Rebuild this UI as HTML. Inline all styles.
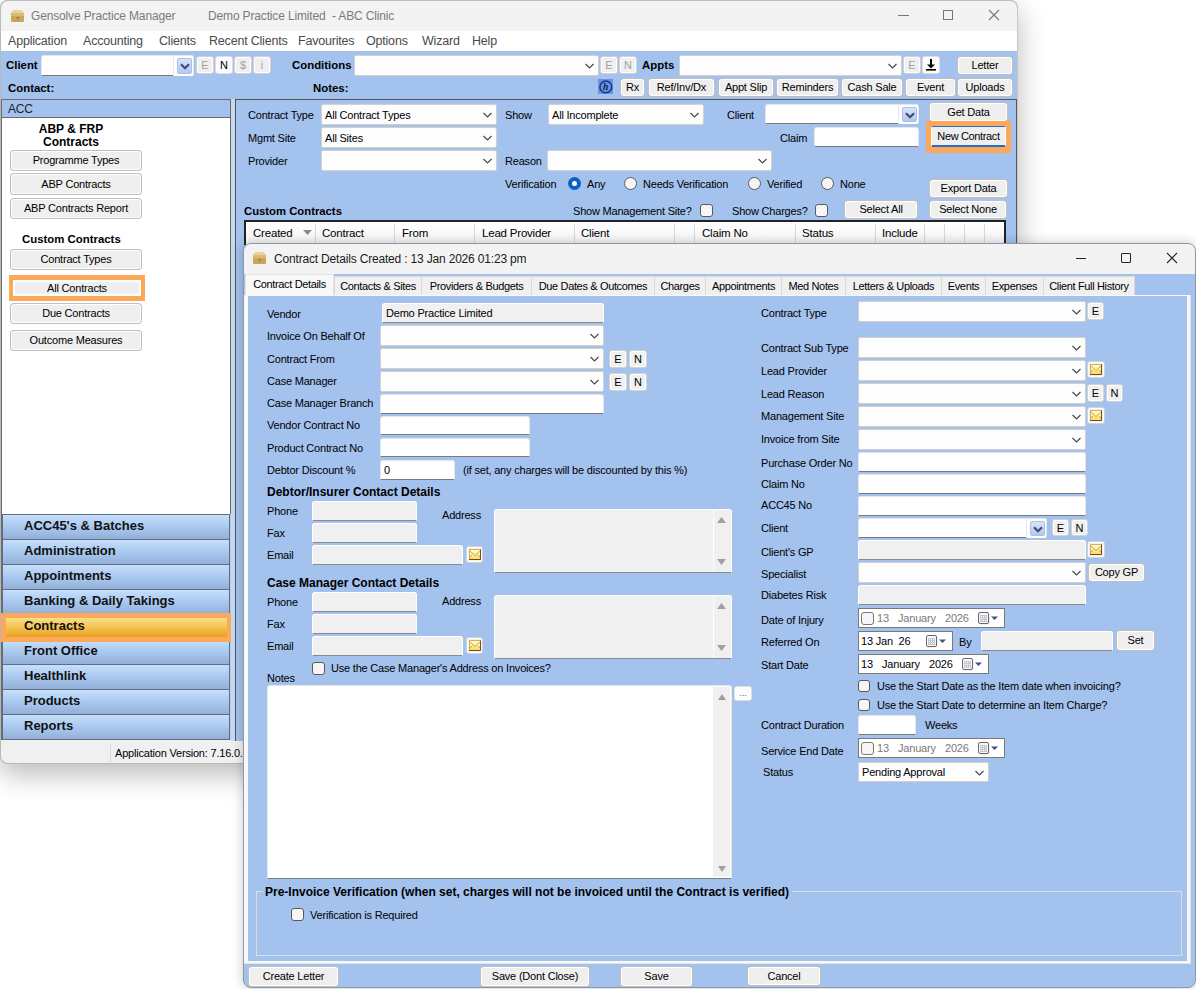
<!DOCTYPE html><html><head><meta charset="utf-8"><style>
html,body{margin:0;padding:0;width:1196px;height:989px;overflow:hidden;background:#fff}
body{position:relative;font-family:"Liberation Sans",sans-serif;font-size:11px;color:#000}
div,svg{position:absolute;box-sizing:border-box}
.t{white-space:nowrap;line-height:14px;letter-spacing:-.2px}
.tb{background:#fff;border:1px solid #e6e6e6;border-bottom:1px solid #7a7a7a;border-radius:3px 3px 0 0}
.cbx{background:#fdfdfd;border:1px solid #d6d0ca;border-radius:2px}
.tb.g{background:#f0f0f0;border-color:#fff;border-bottom-color:#8a8a8a}
.bt{letter-spacing:-.2px;background:#efefef;border:1px solid rgba(0,0,0,.2);box-shadow:inset 0 0 0 1px #fff;border-radius:4px;text-align:center;white-space:nowrap}
.sb{background:#f0f0f0;border:1px solid rgba(0,0,0,.12);box-shadow:inset 0 0 0 1px #fff;border-radius:3px;text-align:center;white-space:nowrap}
.ck{background:#f6f6f6;border:1px solid #5a5a5a;border-radius:3px}
.dd{background:#cfe0fb;border:1px solid #7aa0d8}

</style></head><body>
<svg width="0" height="0" style="left:0;top:0"><defs><linearGradient id="mg" x1="0" y1="0" x2="0" y2="1"><stop offset="0" stop-color="#fffbd8"/><stop offset=".5" stop-color="#fff0a0"/><stop offset="1" stop-color="#f8d868"/></linearGradient></defs></svg>
<div style="left:0px;top:0px;width:1018px;height:764px;border-radius:8px;box-shadow:0 10px 28px rgba(0,0,0,.28);background:#A3C2EE"></div>
<div style="left:0px;top:0px;width:1018px;height:31px;background:#f3f3f3;border-radius:8px 8px 0 0;border:1px solid #bdbdbd;border-bottom:none"></div>
<svg style="left:10px;top:9px" width="15" height="14" viewBox="0 0 15 14"><path d="M1 4L3 1H12L14 4Z" fill="#e8d49a"/><rect x="1" y="4" width="13" height="9" rx="1" fill="#c9a65a"/><rect x="1" y="4" width="13" height="3" fill="#d9bb72"/><text x="7.5" y="12" font-size="6" text-anchor="middle" fill="#8a6a2a" font-family="Liberation Sans">?</text></svg>
<div class=t style="left:31px;top:8.0px;font-size:12px;line-height:16px;color:#7a7a7a;letter-spacing:-.15px">Gensolve Practice Manager</div>
<div class=t style="left:208px;top:8.0px;font-size:12px;line-height:16px;color:#7a7a7a;letter-spacing:-.15px">Demo Practice Limited&nbsp; - ABC Clinic</div>
<div style="left:898px;top:15px;width:11px;height:1px;background:#777"></div>
<div style="left:943px;top:10px;width:10px;height:10px;border:1px solid #777"></div>
<svg style="left:988px;top:9px" width="12" height="12" viewBox="0 0 12 12"><path d="M1 1L11 11M11 1L1 11" stroke="#777" stroke-width="1.1"/></svg>
<div style="left:1px;top:31px;width:1016px;height:20px;background:#fff"></div>
<div class=t style="left:8px;top:33.0px;font-size:12.5px;line-height:16px;color:#4a4a4a;">Application</div>
<div class=t style="left:83px;top:33.0px;font-size:12.5px;line-height:16px;color:#4a4a4a;">Accounting</div>
<div class=t style="left:159px;top:33.0px;font-size:12.5px;line-height:16px;color:#4a4a4a;">Clients</div>
<div class=t style="left:209px;top:33.0px;font-size:12.5px;line-height:16px;color:#4a4a4a;">Recent Clients</div>
<div class=t style="left:298px;top:33.0px;font-size:12.5px;line-height:16px;color:#4a4a4a;">Favourites</div>
<div class=t style="left:366px;top:33.0px;font-size:12.5px;line-height:16px;color:#4a4a4a;">Options</div>
<div class=t style="left:422px;top:33.0px;font-size:12.5px;line-height:16px;color:#4a4a4a;">Wizard</div>
<div class=t style="left:472px;top:33.0px;font-size:12.5px;line-height:16px;color:#4a4a4a;">Help</div>
<div style="left:0px;top:31px;width:1px;height:725px;background:#b8b8b8"></div>
<div style="left:1017px;top:8px;width:1px;height:748px;background:#c8c8c8"></div>
<div class=t style="left:6px;top:58.0px;font-size:11.4px;font-weight:bold;letter-spacing:0;">Client</div>
<div class="tb" style="left:41px;top:55px;width:153px;height:21px"><div style="right:0;top:0;width:20px;height:20px;background:#fff;border-left:1px solid #e4e8f0"><div style="left:3px;top:2px;width:15px;height:16px;border-radius:2px;background:linear-gradient(#d6e3fa,#b4c9ef);border:1px solid #a9bfe6"></div><svg style="left:6px;top:7.0px" width="10" height="7" viewBox="0 0 10 7"><path d="M1 1.2L5 5.2L9 1.2" fill="none" stroke="#3c4e78" stroke-width="2.2"/></svg></div></div>
<div class=sb style="left:196px;top:56px;width:18px;height:18px;line-height:17px;color:#a0a0a0">E</div>
<div class=sb style="left:215px;top:56px;width:18px;height:18px;line-height:17px;color:#000;background:#fbfbfb">N</div>
<div class=sb style="left:234px;top:56px;width:18px;height:18px;line-height:17px;color:#a0a0a0">$</div>
<div class=sb style="left:253px;top:56px;width:18px;height:18px;line-height:17px;color:#a0a0a0">i</div>
<div class=t style="left:292px;top:58.0px;font-size:11.4px;font-weight:bold;letter-spacing:0;">Conditions</div>
<div class="cbx" style="left:354px;top:55px;width:245px;height:21px"><svg style="right:4px;top:7.0px" width="9" height="6" viewBox="0 0 9 6"><path d="M0.5 1L4.5 5L8.5 1" fill="none" stroke="#4a4a4a" stroke-width="1.2"/></svg></div>
<div class=sb style="left:600px;top:56px;width:18px;height:18px;line-height:17px;color:#a0a0a0">E</div>
<div class=sb style="left:619px;top:56px;width:18px;height:18px;line-height:17px;color:#a0a0a0">N</div>
<div class=t style="left:642px;top:58.0px;font-size:11.4px;font-weight:bold;letter-spacing:0;">Appts</div>
<div class="cbx" style="left:679px;top:55px;width:223px;height:21px"><svg style="right:4px;top:7.0px" width="9" height="6" viewBox="0 0 9 6"><path d="M0.5 1L4.5 5L8.5 1" fill="none" stroke="#4a4a4a" stroke-width="1.2"/></svg></div>
<div class=sb style="left:903px;top:56px;width:18px;height:18px;line-height:17px;color:#a0a0a0">E</div>
<div class=sb style="left:922px;top:56px;width:18px;height:18px;background:#fdfdfd"><svg style="left:0;top:0" width="16" height="16" viewBox="0 0 16 16"><rect x="7" y="2" width="2" height="7" fill="#000"/><path d="M4 7.5H12L8 11.5Z" fill="#000"/><rect x="3" y="12" width="10" height="1.6" fill="#000"/></svg></div>
<div class=bt style="left:957px;top:56px;width:56px;height:19px;line-height:17px;">Letter</div>
<div class=t style="left:8px;top:81.0px;font-size:11.4px;font-weight:bold;letter-spacing:0;">Contact:</div>
<div class=t style="left:313px;top:81.0px;font-size:11.4px;font-weight:bold;letter-spacing:0;">Notes:</div>
<div style="left:598px;top:79px;width:15px;height:15px;background:#7092d0"></div>
<svg style="left:598px;top:79px" width="15" height="15" viewBox="0 0 15 15"><circle cx="7.8" cy="7.9" r="5.9" fill="none" stroke="#0a38a8" stroke-width="1.5"/><text x="7.6" y="11.3" font-size="9.5" font-style="italic" font-weight="bold" text-anchor="middle" fill="#102050" font-family="Liberation Serif">h</text></svg>
<div class=bt style="left:620px;top:78px;width:25px;height:19px;line-height:17px;">Rx</div>
<div class=bt style="left:648px;top:78px;width:67px;height:19px;line-height:17px;">Ref/Inv/Dx</div>
<div class=bt style="left:718px;top:78px;width:56px;height:19px;line-height:17px;">Appt Slip</div>
<div class=bt style="left:776px;top:78px;width:63px;height:19px;line-height:17px;">Reminders</div>
<div class=bt style="left:841px;top:78px;width:62px;height:19px;line-height:17px;">Cash Sale</div>
<div class=bt style="left:905px;top:78px;width:51px;height:19px;line-height:17px;">Event</div>
<div class=bt style="left:957px;top:78px;width:56px;height:19px;line-height:17px;">Uploads</div>
<div style="left:1px;top:99px;width:230px;height:642px;background:#fff;border:1px solid #6b6b6b;border-bottom:none"></div>
<div style="left:2px;top:100px;width:228px;height:18px;background:#A3C2EE;border-bottom:1px solid #6b6b6b"></div>
<div class=t style="left:8px;top:101.5px;font-size:12px;color:#222;">ACC</div>
<div class=t style="left:21px;width:100px;top:121.80000000000001px;text-align:center;font-size:12px;font-weight:bold;letter-spacing:0;">ABP &amp; FRP</div>
<div class=t style="left:21px;width:100px;top:134.5px;text-align:center;font-size:12px;font-weight:bold;letter-spacing:0;">Contracts</div>
<div class=bt style="left:10px;top:150px;width:132px;height:21px;line-height:19px;">Programme Types</div>
<div class=bt style="left:10px;top:173px;width:132px;height:22px;line-height:20px;">ABP Contracts</div>
<div class=bt style="left:10px;top:198px;width:132px;height:21px;line-height:19px;">ABP Contracts Report</div>
<div class=t style="left:22px;top:231.8px;font-size:11.4px;font-weight:bold;letter-spacing:0;">Custom Contracts</div>
<div class=bt style="left:10px;top:249px;width:132px;height:21px;line-height:19px;">Contract Types</div>
<div style="left:9px;top:275px;width:136px;height:26px;background:#fba85a"></div>
<div style="left:13px;top:280px;width:128px;height:16px;background:#efefef;border:2px solid #fff;text-align:center;line-height:12px;white-space:nowrap;letter-spacing:-.2px">All Contracts</div>
<div class=bt style="left:10px;top:303px;width:132px;height:21px;line-height:19px;">Due Contracts</div>
<div class=bt style="left:10px;top:330px;width:132px;height:21px;line-height:19px;">Outcome Measures</div>
<div style="left:229px;top:514px;width:1px;height:226px;background:#5f6e82"></div>
<div style="left:230px;top:514px;width:5px;height:226px;background:#b4cdf0"></div>
<div style="left:2px;top:739px;width:228px;height:1px;background:#5f6e82"></div>
<div style="left:2px;top:514px;width:227px;height:25px;background:linear-gradient(#c6e0fb,#a9c8f0 50%,#93afd8);border-top:1px solid #5f6e82;border-left:1px solid #5f6e82"></div>
<div style="left:2px;top:539px;width:227px;height:25px;background:linear-gradient(#c6e0fb,#a9c8f0 50%,#93afd8);border-top:1px solid #5f6e82;border-left:1px solid #5f6e82"></div>
<div style="left:2px;top:564px;width:227px;height:25px;background:linear-gradient(#c6e0fb,#a9c8f0 50%,#93afd8);border-top:1px solid #5f6e82;border-left:1px solid #5f6e82"></div>
<div style="left:2px;top:589px;width:227px;height:25px;background:linear-gradient(#c6e0fb,#a9c8f0 50%,#93afd8);border-top:1px solid #5f6e82;border-left:1px solid #5f6e82"></div>
<div style="left:2px;top:614px;width:227px;height:25px;background:linear-gradient(#c6e0fb,#a9c8f0 50%,#93afd8);border-top:1px solid #5f6e82;border-left:1px solid #5f6e82"></div>
<div style="left:2px;top:639px;width:227px;height:25px;background:linear-gradient(#c6e0fb,#a9c8f0 50%,#93afd8);border-top:1px solid #5f6e82;border-left:1px solid #5f6e82"></div>
<div style="left:2px;top:664px;width:227px;height:25px;background:linear-gradient(#c6e0fb,#a9c8f0 50%,#93afd8);border-top:1px solid #5f6e82;border-left:1px solid #5f6e82"></div>
<div style="left:2px;top:689px;width:227px;height:25px;background:linear-gradient(#c6e0fb,#a9c8f0 50%,#93afd8);border-top:1px solid #5f6e82;border-left:1px solid #5f6e82"></div>
<div style="left:2px;top:714px;width:227px;height:25px;background:linear-gradient(#c6e0fb,#a9c8f0 50%,#93afd8);border-top:1px solid #5f6e82;border-left:1px solid #5f6e82"></div>
<div class=t style="left:24px;top:518.5px;font-size:13px;font-weight:bold;letter-spacing:0;color:#111;">ACC45's &amp; Batches</div>
<div class=t style="left:24px;top:543.5px;font-size:13px;font-weight:bold;letter-spacing:0;color:#111;">Administration</div>
<div class=t style="left:24px;top:568.5px;font-size:13px;font-weight:bold;letter-spacing:0;color:#111;">Appointments</div>
<div class=t style="left:24px;top:593.5px;font-size:13px;font-weight:bold;letter-spacing:0;color:#111;">Banking &amp; Daily Takings</div>
<div style="left:1px;top:613px;width:232px;height:29px;background:#fba85a"></div>
<div style="left:6px;top:618px;width:221px;height:19px;background:linear-gradient(#f8e088,#f3c250 50%,#eaa020)"></div>
<div class=t style="left:24px;top:618.5px;font-size:13px;font-weight:bold;letter-spacing:0;color:#111;">Contracts</div>
<div class=t style="left:24px;top:643.5px;font-size:13px;font-weight:bold;letter-spacing:0;color:#111;">Front Office</div>
<div class=t style="left:24px;top:668.5px;font-size:13px;font-weight:bold;letter-spacing:0;color:#111;">Healthlink</div>
<div class=t style="left:24px;top:693.5px;font-size:13px;font-weight:bold;letter-spacing:0;color:#111;">Products</div>
<div class=t style="left:24px;top:718.5px;font-size:13px;font-weight:bold;letter-spacing:0;color:#111;">Reports</div>
<div style="left:0px;top:740px;width:1018px;height:24px;background:#f0f0f0;border-radius:0 0 8px 8px;border:1px solid #b8b8b8;border-top:none"></div>
<div style="left:110px;top:745px;width:1px;height:17px;background:#d8d8d8"></div>
<div class=t style="left:115px;top:746.0px;color:#000;">Application Version: 7.16.0.</div>
<div style="left:231px;top:99px;width:5px;height:642px;background:#c5d9f3"></div>
<div style="left:235px;top:99px;width:782px;height:642px;background:#A3C2EE;border-left:1px solid #555;border-top:1px solid #555;border-right:1px solid #555"></div>
<div class=t style="left:248px;top:108.0px;">Contract Type</div>
<div class="cbx" style="left:321px;top:104px;width:176px;height:21px"><div class=t style="left:3px;top:2.5px">All Contract Types</div><svg style="right:4px;top:7.0px" width="9" height="6" viewBox="0 0 9 6"><path d="M0.5 1L4.5 5L8.5 1" fill="none" stroke="#4a4a4a" stroke-width="1.2"/></svg></div>
<div class=t style="left:248px;top:131.0px;">Mgmt Site</div>
<div class="cbx" style="left:321px;top:127px;width:176px;height:21px"><div class=t style="left:3px;top:2.5px">All Sites</div><svg style="right:4px;top:7.0px" width="9" height="6" viewBox="0 0 9 6"><path d="M0.5 1L4.5 5L8.5 1" fill="none" stroke="#4a4a4a" stroke-width="1.2"/></svg></div>
<div class=t style="left:248px;top:154.0px;">Provider</div>
<div class="cbx" style="left:321px;top:150px;width:176px;height:21px"><svg style="right:4px;top:7.0px" width="9" height="6" viewBox="0 0 9 6"><path d="M0.5 1L4.5 5L8.5 1" fill="none" stroke="#4a4a4a" stroke-width="1.2"/></svg></div>
<div class=t style="left:505px;top:108.0px;">Show</div>
<div class="cbx" style="left:548px;top:104px;width:156px;height:21px"><div class=t style="left:3px;top:2.5px">All Incomplete</div><svg style="right:4px;top:7.0px" width="9" height="6" viewBox="0 0 9 6"><path d="M0.5 1L4.5 5L8.5 1" fill="none" stroke="#4a4a4a" stroke-width="1.2"/></svg></div>
<div class=t style="left:505px;top:154.0px;">Reason</div>
<div class="cbx" style="left:547px;top:150px;width:225px;height:21px"><svg style="right:4px;top:7.0px" width="9" height="6" viewBox="0 0 9 6"><path d="M0.5 1L4.5 5L8.5 1" fill="none" stroke="#4a4a4a" stroke-width="1.2"/></svg></div>
<div class=t style="left:727px;top:108.0px;">Client</div>
<div class="tb" style="left:765px;top:104px;width:154px;height:20px"><div style="right:0;top:0;width:20px;height:19px;background:#fff;border-left:1px solid #e4e8f0"><div style="left:3px;top:2px;width:15px;height:15px;border-radius:2px;background:linear-gradient(#d6e3fa,#b4c9ef);border:1px solid #a9bfe6"></div><svg style="left:6px;top:6.5px" width="10" height="7" viewBox="0 0 10 7"><path d="M1 1.2L5 5.2L9 1.2" fill="none" stroke="#3c4e78" stroke-width="2.2"/></svg></div></div>
<div class=t style="left:780px;top:131.0px;">Claim</div>
<div class="tb" style="left:814px;top:127px;width:105px;height:20px"></div>
<div class=bt style="left:929px;top:102px;width:79px;height:20px;line-height:18px;">Get Data</div>
<div style="left:926px;top:121px;width:85px;height:32px;background:#fba85a"></div>
<div style="left:931px;top:126px;width:75px;height:21px;background:#efefef;border:1px solid #fff;border-top:1px solid #1f6fd0;border-bottom:2px solid #1f6fd0;border-radius:2px;text-align:center;line-height:18px;white-space:nowrap;letter-spacing:-.35px">New Contract</div>
<div class=t style="left:505px;top:177.0px;">Verification</div>
<div style="left:568.0px;top:177.0px;width:13px;height:13px;border-radius:50%;background:#0f5fc4"><div style="left:4px;top:4px;width:5px;height:5px;border-radius:50%;background:#fff"></div></div>
<div class=t style="left:587px;top:177.0px;">Any</div>
<div style="left:623.5px;top:177.0px;width:13px;height:13px;box-sizing:border-box;border-radius:50%;background:#f6f6f6;border:1px solid #5a5a5a"></div>
<div class=t style="left:643px;top:177.0px;">Needs Verification</div>
<div style="left:747.5px;top:177.0px;width:13px;height:13px;box-sizing:border-box;border-radius:50%;background:#f6f6f6;border:1px solid #5a5a5a"></div>
<div class=t style="left:767px;top:177.0px;">Verified</div>
<div style="left:820.5px;top:177.0px;width:13px;height:13px;box-sizing:border-box;border-radius:50%;background:#f6f6f6;border:1px solid #5a5a5a"></div>
<div class=t style="left:840px;top:177.0px;">None</div>
<div class=bt style="left:929px;top:179px;width:79px;height:19px;line-height:17px;">Export Data</div>
<div class=t style="left:244px;top:204.0px;font-size:11.3px;font-weight:bold;letter-spacing:0">Custom Contracts</div>
<div class=t style="left:573px;top:204.0px;">Show Management Site?</div>
<div class=ck style="left:700px;top:204px;width:13px;height:13px"></div>
<div class=t style="left:732px;top:204.0px;">Show Charges?</div>
<div class=ck style="left:815px;top:204px;width:13px;height:13px"></div>
<div class=bt style="left:844px;top:200px;width:74px;height:19px;line-height:17px;">Select All</div>
<div class=bt style="left:929px;top:200px;width:78px;height:19px;line-height:17px;">Select None</div>
<div style="left:244px;top:220px;width:762px;height:25px;background:#fff;border:2px solid #222;border-bottom:none"></div>
<div style="left:246px;top:222px;width:758px;height:23px;background:linear-gradient(#fff,#f4f4f4)"></div>
<div style="left:315px;top:224px;width:1px;height:19px;background:#d8d8d8"></div>
<div style="left:394px;top:224px;width:1px;height:19px;background:#d8d8d8"></div>
<div style="left:474px;top:224px;width:1px;height:19px;background:#d8d8d8"></div>
<div style="left:574px;top:224px;width:1px;height:19px;background:#d8d8d8"></div>
<div style="left:674px;top:224px;width:1px;height:19px;background:#d8d8d8"></div>
<div style="left:694px;top:224px;width:1px;height:19px;background:#d8d8d8"></div>
<div style="left:795px;top:224px;width:1px;height:19px;background:#d8d8d8"></div>
<div style="left:875px;top:224px;width:1px;height:19px;background:#d8d8d8"></div>
<div style="left:924px;top:224px;width:1px;height:19px;background:#d8d8d8"></div>
<div style="left:944px;top:224px;width:1px;height:19px;background:#d8d8d8"></div>
<div style="left:964px;top:224px;width:1px;height:19px;background:#d8d8d8"></div>
<div style="left:984px;top:224px;width:1px;height:19px;background:#d8d8d8"></div>
<div class=t style="left:253px;top:226.0px;font-size:11.5px;">Created</div>
<div class=t style="left:322px;top:226.0px;font-size:11.5px;">Contract</div>
<div class=t style="left:402px;top:226.0px;font-size:11.5px;">From</div>
<div class=t style="left:482px;top:226.0px;font-size:11.5px;">Lead Provider</div>
<div class=t style="left:581px;top:226.0px;font-size:11.5px;">Client</div>
<div class=t style="left:702px;top:226.0px;font-size:11.5px;">Claim No</div>
<div class=t style="left:802px;top:226.0px;font-size:11.5px;">Status</div>
<div class=t style="left:882px;top:226.0px;font-size:11.5px;">Include</div>
<svg style="left:303px;top:230px" width="9" height="5" viewBox="0 0 9 5"><path d="M0 0H9L4.5 5Z" fill="#8a8a8a"/></svg>
<div style="left:243px;top:243px;width:953px;height:745px;background:#A3C2EE;border:1px solid #8f98a6;border-radius:8px;box-shadow:0 0 12px rgba(0,0,0,.22)"></div>
<div style="left:244px;top:244px;width:951px;height:30px;background:#f3f3f3;border-radius:7px 7px 0 0"></div>
<svg style="left:252px;top:251px" width="15" height="14" viewBox="0 0 15 14"><path d="M1 4L3 1H12L14 4Z" fill="#e8d49a"/><rect x="1" y="4" width="13" height="9" rx="1" fill="#c9a65a"/><rect x="1" y="4" width="13" height="3" fill="#d9bb72"/><text x="7.5" y="12" font-size="6" text-anchor="middle" fill="#8a6a2a" font-family="Liberation Sans">?</text></svg>
<div class=t style="left:274px;top:250.5px;font-size:12px;line-height:16px;color:#1a1a1a;letter-spacing:-.18px">Contract Details Created : 13 Jan 2026 01:23 pm</div>
<div style="left:1076px;top:258px;width:10px;height:1px;background:#222"></div>
<div style="left:1121px;top:253px;width:10px;height:10px;border:1px solid #222;border-radius:1px"></div>
<svg style="left:1166px;top:252px" width="12" height="12" viewBox="0 0 12 12"><path d="M1 1L11 11M11 1L1 11" stroke="#222" stroke-width="1.1"/></svg>
<div style="left:244px;top:274px;width:951px;height:22px;background:#A3C2EE"></div>
<div style="left:334px;top:276px;width:88px;height:20px;background:#f0f0f0;border:1px solid #dadada;border-bottom:none"></div>
<div class=t style="left:334px;width:88px;top:279px;text-align:center;letter-spacing:-.35px">Contacts &amp; Sites</div>
<div style="left:421px;top:276px;width:111px;height:20px;background:#f0f0f0;border:1px solid #dadada;border-bottom:none"></div>
<div class=t style="left:421px;width:111px;top:279px;text-align:center;letter-spacing:-.35px">Providers &amp; Budgets</div>
<div style="left:531px;top:276px;width:124px;height:20px;background:#f0f0f0;border:1px solid #dadada;border-bottom:none"></div>
<div class=t style="left:531px;width:124px;top:279px;text-align:center;letter-spacing:-.35px">Due Dates &amp; Outcomes</div>
<div style="left:654px;top:276px;width:52px;height:20px;background:#f0f0f0;border:1px solid #dadada;border-bottom:none"></div>
<div class=t style="left:654px;width:52px;top:279px;text-align:center;letter-spacing:-.35px">Charges</div>
<div style="left:705px;top:276px;width:77px;height:20px;background:#f0f0f0;border:1px solid #dadada;border-bottom:none"></div>
<div class=t style="left:705px;width:77px;top:279px;text-align:center;letter-spacing:-.35px">Appointments</div>
<div style="left:781px;top:276px;width:65px;height:20px;background:#f0f0f0;border:1px solid #dadada;border-bottom:none"></div>
<div class=t style="left:781px;width:65px;top:279px;text-align:center;letter-spacing:-.35px">Med Notes</div>
<div style="left:845px;top:276px;width:97px;height:20px;background:#f0f0f0;border:1px solid #dadada;border-bottom:none"></div>
<div class=t style="left:845px;width:97px;top:279px;text-align:center;letter-spacing:-.35px">Letters &amp; Uploads</div>
<div style="left:941px;top:276px;width:45px;height:20px;background:#f0f0f0;border:1px solid #dadada;border-bottom:none"></div>
<div class=t style="left:941px;width:45px;top:279px;text-align:center;letter-spacing:-.35px">Events</div>
<div style="left:985px;top:276px;width:59px;height:20px;background:#f0f0f0;border:1px solid #dadada;border-bottom:none"></div>
<div class=t style="left:985px;width:59px;top:279px;text-align:center;letter-spacing:-.35px">Expenses</div>
<div style="left:1043px;top:276px;width:92px;height:20px;background:#f0f0f0;border:1px solid #dadada;border-bottom:none"></div>
<div class=t style="left:1043px;width:92px;top:279px;text-align:center;letter-spacing:-.35px">Client Full History</div>
<div style="left:244px;top:295px;width:947px;height:669px;background:#f8f8f8;border-right:1px solid #e4e4e4;border-bottom:1px solid #e4e4e4"></div>
<div style="left:248px;top:296px;width:939px;height:665px;background:#A3C2EE"></div>
<div style="left:245px;top:274px;width:89px;height:22px;background:#f8f8f8;border:1px solid #e4e4e4;border-bottom:none"></div>
<div class=t style="left:245px;width:89px;top:277.2px;text-align:center;letter-spacing:-.35px">Contract Details</div>
<div class=t style="left:267px;top:306.5px;">Vendor</div>
<div class=t style="left:267px;top:329.0px;">Invoice On Behalf Of</div>
<div class=t style="left:267px;top:351.5px;">Contract From</div>
<div class=t style="left:267px;top:374.0px;">Case Manager</div>
<div class=t style="left:267px;top:396.0px;">Case Manager Branch</div>
<div class=t style="left:267px;top:418.0px;">Vendor Contract No</div>
<div class=t style="left:267px;top:440.5px;">Product Contract No</div>
<div class=t style="left:267px;top:463.0px;">Debtor Discount %</div>
<div class="tb g" style="left:382px;top:303px;width:222px;height:20px"><div class=t style="left:3px;top:2.0px;">Demo Practice Limited</div></div>
<div class="cbx" style="left:380px;top:325px;width:224px;height:21px"><svg style="right:4px;top:7.0px" width="9" height="6" viewBox="0 0 9 6"><path d="M0.5 1L4.5 5L8.5 1" fill="none" stroke="#4a4a4a" stroke-width="1.2"/></svg></div>
<div class="cbx" style="left:380px;top:348px;width:224px;height:21px"><svg style="right:4px;top:7.0px" width="9" height="6" viewBox="0 0 9 6"><path d="M0.5 1L4.5 5L8.5 1" fill="none" stroke="#4a4a4a" stroke-width="1.2"/></svg></div>
<div class=sb style="left:609px;top:350px;width:18px;height:18px;line-height:17px;color:#000">E</div>
<div class=sb style="left:629px;top:350px;width:18px;height:18px;line-height:17px;color:#000">N</div>
<div class="cbx" style="left:380px;top:371px;width:224px;height:21px"><svg style="right:4px;top:7.0px" width="9" height="6" viewBox="0 0 9 6"><path d="M0.5 1L4.5 5L8.5 1" fill="none" stroke="#4a4a4a" stroke-width="1.2"/></svg></div>
<div class=sb style="left:609px;top:373px;width:18px;height:18px;line-height:17px;color:#000">E</div>
<div class=sb style="left:629px;top:373px;width:18px;height:18px;line-height:17px;color:#000">N</div>
<div class="tb" style="left:380px;top:394px;width:224px;height:20px"></div>
<div class="tb" style="left:380px;top:416px;width:150px;height:19px"></div>
<div class="tb" style="left:380px;top:438px;width:150px;height:19px"></div>
<div class="tb" style="left:380px;top:460px;width:75px;height:20px"><div class=t style="left:3px;top:2.0px;">0</div></div>
<div class=t style="left:463px;top:463.0px;">(if set, any charges will be discounted by this %)</div>
<div class=t style="left:267px;top:485.0px;font-size:12px;font-weight:bold;letter-spacing:0;">Debtor/Insurer Contact Details</div>
<div class=t style="left:267px;top:504.0px;">Phone</div>
<div class="tb g" style="left:312px;top:501px;width:105px;height:20px"></div>
<div class=t style="left:267px;top:526.0px;">Fax</div>
<div class="tb g" style="left:312px;top:523px;width:105px;height:20px"></div>
<div class=t style="left:267px;top:548.0px;">Email</div>
<div class="tb g" style="left:312px;top:545px;width:151px;height:20px"></div>
<div class=sb style="left:466px;top:546px;width:17px;height:17px"><svg style="left:2px;top:2px" width="12" height="11" viewBox="0 0 12 11"><rect x="0.5" y="0.5" width="11" height="10" fill="url(#mg)" stroke="#d2b060"/><path d="M0.5 1.5L6 6.6L11.5 1.5M0.5 8.5L3.2 6M11.5 8.5L8.8 6" fill="none" stroke="#d09a38" stroke-width=".9"/><path d="M0 10.5H11.5V0.5" fill="none" stroke="#6e5016"/></svg></div>
<div class=t style="left:442px;top:508.0px;">Address</div>
<div class="tb g" style="left:494px;top:509px;width:238px;height:64px"><div style="right:0;top:0;width:18px;height:100%;background:#f0f0f0;border-left:1px solid #fff"></div><svg style="right:5px;top:7px" width="9" height="6" viewBox="0 0 9 6"><path d="M0 6H9L4.5 0Z" fill="#a0a0a0"/></svg><svg style="right:5px;bottom:7px" width="9" height="6" viewBox="0 0 9 6"><path d="M0 0H9L4.5 6Z" fill="#a0a0a0"/></svg></div>
<div class=t style="left:267px;top:576.0px;font-size:12px;font-weight:bold;letter-spacing:0;">Case Manager Contact Details</div>
<div class=t style="left:267px;top:595.0px;">Phone</div>
<div class="tb g" style="left:312px;top:592px;width:105px;height:20px"></div>
<div class=t style="left:267px;top:617.0px;">Fax</div>
<div class="tb g" style="left:312px;top:614px;width:105px;height:20px"></div>
<div class=t style="left:267px;top:639.0px;">Email</div>
<div class="tb g" style="left:312px;top:636px;width:151px;height:20px"></div>
<div class=sb style="left:466px;top:637px;width:17px;height:17px"><svg style="left:2px;top:2px" width="12" height="11" viewBox="0 0 12 11"><rect x="0.5" y="0.5" width="11" height="10" fill="url(#mg)" stroke="#d2b060"/><path d="M0.5 1.5L6 6.6L11.5 1.5M0.5 8.5L3.2 6M11.5 8.5L8.8 6" fill="none" stroke="#d09a38" stroke-width=".9"/><path d="M0 10.5H11.5V0.5" fill="none" stroke="#6e5016"/></svg></div>
<div class=t style="left:442px;top:594.0px;">Address</div>
<div class="tb g" style="left:494px;top:595px;width:238px;height:64px"><div style="right:0;top:0;width:18px;height:100%;background:#f0f0f0;border-left:1px solid #fff"></div><svg style="right:5px;top:7px" width="9" height="6" viewBox="0 0 9 6"><path d="M0 6H9L4.5 0Z" fill="#a0a0a0"/></svg><svg style="right:5px;bottom:7px" width="9" height="6" viewBox="0 0 9 6"><path d="M0 0H9L4.5 6Z" fill="#a0a0a0"/></svg></div>
<div class=ck style="left:312px;top:662px;width:13px;height:13px"></div>
<div class=t style="left:331px;top:661.0px;">Use the Case Manager's Address on Invoices?</div>
<div class=t style="left:267px;top:671.0px;">Notes</div>
<div class="tb" style="left:267px;top:685px;width:465px;height:194px"><div style="right:1px;top:1px;width:17px;height:calc(100% - 2px);background:#f0f0f0"></div><svg style="right:5px;top:8px" width="8" height="6" viewBox="0 0 8 6"><path d="M0 6H8L4 0Z" fill="#a0a0a0"/></svg><svg style="right:5px;bottom:6px" width="8" height="6" viewBox="0 0 8 6"><path d="M0 0H8L4 6Z" fill="#a0a0a0"/></svg></div>
<div class=sb style="left:734px;top:686px;width:18px;height:15px;background:#fdfdfd;line-height:12px;font-size:9px;color:#3a5a9a">...</div>
<div class=t style="left:761px;top:306.0px;">Contract Type</div>
<div class=t style="left:761px;top:341.0px;">Contract Sub Type</div>
<div class=t style="left:761px;top:364.0px;">Lead Provider</div>
<div class=t style="left:761px;top:386.5px;">Lead Reason</div>
<div class=t style="left:761px;top:408.5px;">Management Site</div>
<div class=t style="left:761px;top:432.0px;">Invoice from Site</div>
<div class=t style="left:761px;top:456.0px;">Purchase Order No</div>
<div class=t style="left:761px;top:476.5px;">Claim No</div>
<div class=t style="left:761px;top:498.0px;">ACC45 No</div>
<div class=t style="left:761px;top:520.5px;">Client</div>
<div class=t style="left:761px;top:545.0px;">Client's GP</div>
<div class=t style="left:761px;top:567.0px;">Specialist</div>
<div class=t style="left:761px;top:587.5px;">Diabetes Risk</div>
<div class=t style="left:761px;top:613.0px;">Date of Injury</div>
<div class=t style="left:761px;top:635.0px;">Referred On</div>
<div class=t style="left:761px;top:658.0px;">Start Date</div>
<div class=t style="left:761px;top:718.0px;">Contract Duration</div>
<div class=t style="left:761px;top:743.5px;">Service End Date</div>
<div class=t style="left:763px;top:764.5px;">Status</div>
<div class="cbx" style="left:858px;top:301px;width:228px;height:21px"><svg style="right:4px;top:7.0px" width="9" height="6" viewBox="0 0 9 6"><path d="M0.5 1L4.5 5L8.5 1" fill="none" stroke="#4a4a4a" stroke-width="1.2"/></svg></div>
<div class=sb style="left:1087px;top:302px;width:17px;height:18px;line-height:17px;color:#000">E</div>
<div class="cbx" style="left:858px;top:337px;width:228px;height:21px"><svg style="right:4px;top:7.0px" width="9" height="6" viewBox="0 0 9 6"><path d="M0.5 1L4.5 5L8.5 1" fill="none" stroke="#4a4a4a" stroke-width="1.2"/></svg></div>
<div class="cbx" style="left:858px;top:360px;width:228px;height:21px"><svg style="right:4px;top:7.0px" width="9" height="6" viewBox="0 0 9 6"><path d="M0.5 1L4.5 5L8.5 1" fill="none" stroke="#4a4a4a" stroke-width="1.2"/></svg></div>
<div class=sb style="left:1087px;top:361px;width:18px;height:17px"><svg style="left:2px;top:2px" width="12" height="11" viewBox="0 0 12 11"><rect x="0.5" y="0.5" width="11" height="10" fill="url(#mg)" stroke="#d2b060"/><path d="M0.5 1.5L6 6.6L11.5 1.5M0.5 8.5L3.2 6M11.5 8.5L8.8 6" fill="none" stroke="#d09a38" stroke-width=".9"/><path d="M0 10.5H11.5V0.5" fill="none" stroke="#6e5016"/></svg></div>
<div class="cbx" style="left:858px;top:383px;width:228px;height:21px"><svg style="right:4px;top:7.0px" width="9" height="6" viewBox="0 0 9 6"><path d="M0.5 1L4.5 5L8.5 1" fill="none" stroke="#4a4a4a" stroke-width="1.2"/></svg></div>
<div class=sb style="left:1087px;top:384px;width:17px;height:18px;line-height:17px;color:#000">E</div>
<div class=sb style="left:1106px;top:384px;width:17px;height:18px;line-height:17px;color:#000">N</div>
<div class="cbx" style="left:858px;top:406px;width:228px;height:21px"><svg style="right:4px;top:7.0px" width="9" height="6" viewBox="0 0 9 6"><path d="M0.5 1L4.5 5L8.5 1" fill="none" stroke="#4a4a4a" stroke-width="1.2"/></svg></div>
<div class=sb style="left:1087px;top:407px;width:18px;height:17px"><svg style="left:2px;top:2px" width="12" height="11" viewBox="0 0 12 11"><rect x="0.5" y="0.5" width="11" height="10" fill="url(#mg)" stroke="#d2b060"/><path d="M0.5 1.5L6 6.6L11.5 1.5M0.5 8.5L3.2 6M11.5 8.5L8.8 6" fill="none" stroke="#d09a38" stroke-width=".9"/><path d="M0 10.5H11.5V0.5" fill="none" stroke="#6e5016"/></svg></div>
<div class="cbx" style="left:858px;top:429px;width:228px;height:21px"><svg style="right:4px;top:7.0px" width="9" height="6" viewBox="0 0 9 6"><path d="M0.5 1L4.5 5L8.5 1" fill="none" stroke="#4a4a4a" stroke-width="1.2"/></svg></div>
<div class="tb" style="left:858px;top:452px;width:228px;height:20px"></div>
<div class="tb" style="left:858px;top:474px;width:228px;height:20px"></div>
<div class="tb" style="left:858px;top:496px;width:228px;height:20px"></div>
<div class="tb" style="left:858px;top:518px;width:189px;height:20px"><div style="right:0;top:0;width:20px;height:19px;background:#fff;border-left:1px solid #e4e8f0"><div style="left:3px;top:2px;width:15px;height:15px;border-radius:2px;background:linear-gradient(#d6e3fa,#b4c9ef);border:1px solid #a9bfe6"></div><svg style="left:6px;top:6.5px" width="10" height="7" viewBox="0 0 10 7"><path d="M1 1.2L5 5.2L9 1.2" fill="none" stroke="#3c4e78" stroke-width="2.2"/></svg></div></div>
<div class=sb style="left:1052px;top:519px;width:17px;height:17px;line-height:16px;color:#000">E</div>
<div class=sb style="left:1071px;top:519px;width:17px;height:17px;line-height:16px;color:#000">N</div>
<div class="tb g" style="left:858px;top:540px;width:228px;height:20px"></div>
<div class=sb style="left:1087px;top:541px;width:18px;height:17px"><svg style="left:2px;top:2px" width="12" height="11" viewBox="0 0 12 11"><rect x="0.5" y="0.5" width="11" height="10" fill="url(#mg)" stroke="#d2b060"/><path d="M0.5 1.5L6 6.6L11.5 1.5M0.5 8.5L3.2 6M11.5 8.5L8.8 6" fill="none" stroke="#d09a38" stroke-width=".9"/><path d="M0 10.5H11.5V0.5" fill="none" stroke="#6e5016"/></svg></div>
<div class="cbx" style="left:858px;top:562px;width:228px;height:21px"><svg style="right:4px;top:7.0px" width="9" height="6" viewBox="0 0 9 6"><path d="M0.5 1L4.5 5L8.5 1" fill="none" stroke="#4a4a4a" stroke-width="1.2"/></svg></div>
<div class=bt style="left:1088px;top:563px;width:57px;height:19px;line-height:17px;">Copy GP</div>
<div class="tb g" style="left:858px;top:585px;width:228px;height:20px"></div>
<div style="left:858px;top:608px;width:147px;height:20px;background:#fff;border:1px solid #7a7a7a"><div class=ck style="left:2px;top:3px;width:13px;height:13px;border-color:#777"></div><div class=t style="left:18px;top:2px;color:#7a7a7a">13</div><div class=t style="left:39px;top:2px;color:#7a7a7a">January</div><div class=t style="left:86px;top:2px;color:#7a7a7a">2026</div><svg style="left:119px;top:3px" width="24" height="14" viewBox="0 0 24 14"><rect x="1.5" y="1.5" width="10" height="11" rx="1.5" fill="#000" opacity=".12"/><rect x="0.5" y="0.5" width="10" height="11" rx="1.5" fill="#fafbfe" stroke="#6e6666"/><rect x="2" y="3" width="7" height="7" fill="#c2c6ce"/><rect x="3" y="4" width="1" height="1" fill="#fff"/><rect x="3" y="6" width="1" height="1" fill="#fff"/><rect x="3" y="8" width="1" height="1" fill="#fff"/><rect x="5" y="4" width="1" height="1" fill="#fff"/><rect x="5" y="6" width="1" height="1" fill="#fff"/><rect x="5" y="8" width="1" height="1" fill="#fff"/><rect x="7" y="4" width="1" height="1" fill="#fff"/><rect x="7" y="6" width="1" height="1" fill="#fff"/><rect x="7" y="8" width="1" height="1" fill="#fff"/><path d="M13 4.5H20L16.5 8Z" fill="#3e5280"/></svg></div>
<div style="left:858px;top:631px;width:95px;height:20px;background:#fff;border:1px solid #7a7a7a"><div class=t style="left:2px;top:2px;color:#000">13 Jan&nbsp; 26</div><svg style="left:67px;top:3px" width="24" height="14" viewBox="0 0 24 14"><rect x="1.5" y="1.5" width="10" height="11" rx="1.5" fill="#000" opacity=".12"/><rect x="0.5" y="0.5" width="10" height="11" rx="1.5" fill="#fafbfe" stroke="#6e6666"/><rect x="2" y="3" width="7" height="7" fill="#c2c6ce"/><rect x="3" y="4" width="1" height="1" fill="#fff"/><rect x="3" y="6" width="1" height="1" fill="#fff"/><rect x="3" y="8" width="1" height="1" fill="#fff"/><rect x="5" y="4" width="1" height="1" fill="#fff"/><rect x="5" y="6" width="1" height="1" fill="#fff"/><rect x="5" y="8" width="1" height="1" fill="#fff"/><rect x="7" y="4" width="1" height="1" fill="#fff"/><rect x="7" y="6" width="1" height="1" fill="#fff"/><rect x="7" y="8" width="1" height="1" fill="#fff"/><path d="M13 4.5H20L16.5 8Z" fill="#3e5280"/></svg></div>
<div class=t style="left:959px;top:635.0px;">By</div>
<div class="tb g" style="left:981px;top:631px;width:132px;height:20px"></div>
<div class=bt style="left:1116px;top:630px;width:39px;height:21px;line-height:19px;">Set</div>
<div style="left:858px;top:654px;width:131px;height:20px;background:#fff;border:1px solid #7a7a7a"><div class=t style="left:2px;top:2px;color:#000">13</div><div class=t style="left:23px;top:2px;color:#000">January</div><div class=t style="left:70px;top:2px;color:#000">2026</div><svg style="left:103px;top:3px" width="24" height="14" viewBox="0 0 24 14"><rect x="1.5" y="1.5" width="10" height="11" rx="1.5" fill="#000" opacity=".12"/><rect x="0.5" y="0.5" width="10" height="11" rx="1.5" fill="#fafbfe" stroke="#6e6666"/><rect x="2" y="3" width="7" height="7" fill="#c2c6ce"/><rect x="3" y="4" width="1" height="1" fill="#fff"/><rect x="3" y="6" width="1" height="1" fill="#fff"/><rect x="3" y="8" width="1" height="1" fill="#fff"/><rect x="5" y="4" width="1" height="1" fill="#fff"/><rect x="5" y="6" width="1" height="1" fill="#fff"/><rect x="5" y="8" width="1" height="1" fill="#fff"/><rect x="7" y="4" width="1" height="1" fill="#fff"/><rect x="7" y="6" width="1" height="1" fill="#fff"/><rect x="7" y="8" width="1" height="1" fill="#fff"/><path d="M13 4.5H20L16.5 8Z" fill="#3e5280"/></svg></div>
<div class=ck style="left:858px;top:680px;width:12px;height:12px"></div>
<div class=t style="left:877px;top:679.0px;">Use the Start Date as the Item date when invoicing?</div>
<div class=ck style="left:858px;top:699px;width:12px;height:12px"></div>
<div class=t style="left:877px;top:698.0px;">Use the Start Date to determine an Item Charge?</div>
<div class="tb" style="left:858px;top:715px;width:58px;height:20px"></div>
<div class=t style="left:925px;top:718.0px;">Weeks</div>
<div style="left:858px;top:738px;width:147px;height:20px;background:#fff;border:1px solid #7a7a7a"><div class=ck style="left:2px;top:3px;width:13px;height:13px;border-color:#777"></div><div class=t style="left:18px;top:2px;color:#7a7a7a">13</div><div class=t style="left:39px;top:2px;color:#7a7a7a">January</div><div class=t style="left:86px;top:2px;color:#7a7a7a">2026</div><svg style="left:119px;top:3px" width="24" height="14" viewBox="0 0 24 14"><rect x="1.5" y="1.5" width="10" height="11" rx="1.5" fill="#000" opacity=".12"/><rect x="0.5" y="0.5" width="10" height="11" rx="1.5" fill="#fafbfe" stroke="#6e6666"/><rect x="2" y="3" width="7" height="7" fill="#c2c6ce"/><rect x="3" y="4" width="1" height="1" fill="#fff"/><rect x="3" y="6" width="1" height="1" fill="#fff"/><rect x="3" y="8" width="1" height="1" fill="#fff"/><rect x="5" y="4" width="1" height="1" fill="#fff"/><rect x="5" y="6" width="1" height="1" fill="#fff"/><rect x="5" y="8" width="1" height="1" fill="#fff"/><rect x="7" y="4" width="1" height="1" fill="#fff"/><rect x="7" y="6" width="1" height="1" fill="#fff"/><rect x="7" y="8" width="1" height="1" fill="#fff"/><path d="M13 4.5H20L16.5 8Z" fill="#3e5280"/></svg></div>
<div class="cbx" style="left:858px;top:762px;width:131px;height:20px"><div class=t style="left:3px;top:2.0px">Pending Approval</div><svg style="right:4px;top:6.5px" width="9" height="6" viewBox="0 0 9 6"><path d="M0.5 1L4.5 5L8.5 1" fill="none" stroke="#4a4a4a" stroke-width="1.2"/></svg></div>
<div style="left:256px;top:891px;width:926px;height:65px;border:1px solid #dcdcdc"></div>
<div style="left:263px;top:884px;width:529px;height:14px;background:#A3C2EE"></div>
<div class=t style="left:265px;top:884.5px;font-size:12px;font-weight:bold;letter-spacing:0">Pre-Invoice Verification (when set, charges will not be invoiced until the Contract is verified)</div>
<div class=ck style="left:291px;top:908px;width:13px;height:13px"></div>
<div class=t style="left:310px;top:908.0px;">Verification is Required</div>
<div class=bt style="left:248px;top:966px;width:91px;height:21px;line-height:19px;">Create Letter</div>
<div class=bt style="left:480px;top:966px;width:110px;height:21px;line-height:19px;">Save (Dont Close)</div>
<div class=bt style="left:620px;top:966px;width:73px;height:21px;line-height:19px;">Save</div>
<div class=bt style="left:747px;top:966px;width:74px;height:20px;line-height:18px;">Cancel</div>
</body></html>
